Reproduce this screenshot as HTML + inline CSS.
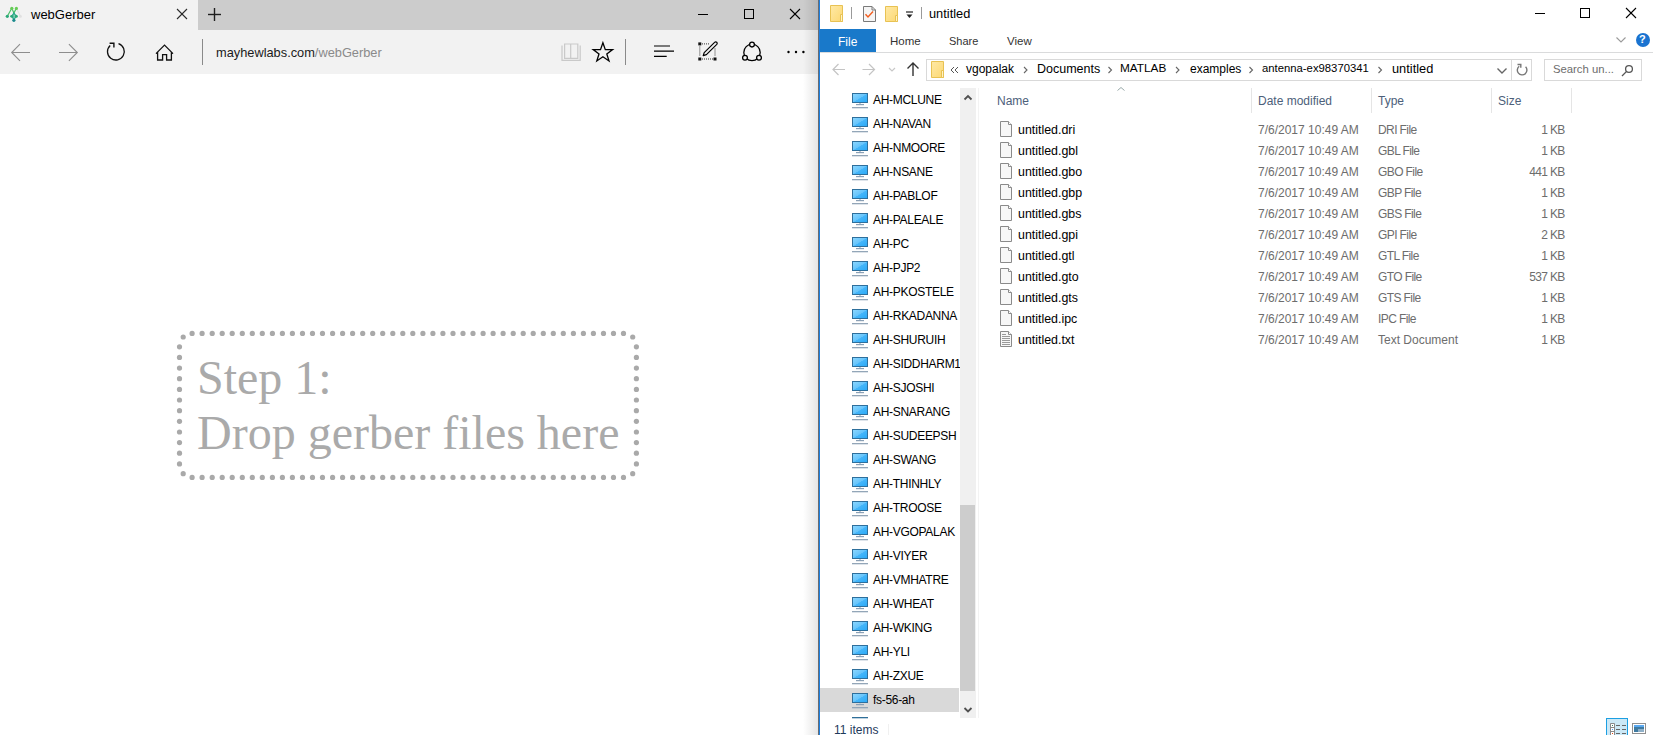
<!DOCTYPE html>
<html><head><meta charset="utf-8">
<style>
*{margin:0;padding:0;box-sizing:border-box}
html,body{width:1653px;height:735px;overflow:hidden;background:#fff;font-family:"Liberation Sans",sans-serif}
.a{position:absolute}
.t{position:absolute;white-space:pre;line-height:1}
svg{position:absolute;overflow:visible}
</style></head><body>
<!-- ============ EDGE ============ -->
<div class="a" style="left:0;top:0;width:818px;height:30px;background:#cccccc"></div>
<div class="a" style="left:0;top:0;width:198px;height:30px;background:#f2f2f2"></div>
<div class="a" style="left:0;top:30px;width:818px;height:44px;background:#f2f2f2"></div>

<!-- favicon -->
<svg style="left:0;top:0" width="1" height="1">
 <g stroke-width="1.2" fill="none" stroke-linecap="round">
  <line x1="16.5" y1="8.5" x2="20.5" y2="16.3" stroke="#e2e2e2"/>
  <line x1="11.8" y1="8.3" x2="7.3" y2="16.3" stroke="#4cc06a"/>
  <line x1="11.8" y1="8.3" x2="13.9" y2="13" stroke="#4cc06a"/>
  <line x1="16.3" y1="8.4" x2="13.9" y2="13" stroke="#4cc06a"/>
  <line x1="13.9" y1="13" x2="13.9" y2="20.3" stroke="#2ca98a"/>
  <path d="M13.9 13L11.6 16.3L13.9 19.5L16.3 16.3Z" stroke="#2aa98a"/>
 </g>
 <circle cx="20.4" cy="16.4" r="1.4" fill="#e0e0e0"/>
 <circle cx="11.8" cy="8.3" r="1.6" fill="#66cc55"/>
 <circle cx="16.4" cy="8.4" r="1.6" fill="#66cc55"/>
 <circle cx="7.3" cy="16.3" r="1.6" fill="#2aa878"/>
 <circle cx="11.6" cy="16.3" r="1.4" fill="#2aa878"/>
 <circle cx="16.3" cy="16.3" r="1.5" fill="#2aa878"/>
 <circle cx="13.9" cy="20.3" r="1.6" fill="#1b8a8c"/>
</svg>
<div class="t" style="left:31px;top:7.6px;font-size:13px;color:#000">webGerber</div>
<svg style="left:0;top:0" width="1" height="1" stroke="#2b2b2b" stroke-width="1.1">
 <line x1="177" y1="9" x2="187" y2="19"/><line x1="187" y1="9" x2="177" y2="19"/>
</svg>
<svg style="left:0;top:0" width="1" height="1" stroke="#1f1f1f" stroke-width="1.4">
 <line x1="214.5" y1="8" x2="214.5" y2="21"/><line x1="208" y1="14.5" x2="221" y2="14.5"/>
</svg>
<!-- window controls -->
<div class="a" style="left:698px;top:14px;width:10px;height:1px;background:#000"></div>
<div class="a" style="left:744px;top:9px;width:10px;height:10px;border:1px solid #000"></div>
<svg style="left:0;top:0" width="1" height="1" stroke="#000" stroke-width="1.1">
 <line x1="790" y1="9" x2="800" y2="19"/><line x1="800" y1="9" x2="790" y2="19"/>
</svg>
<!-- toolbar icons -->
<svg style="left:0;top:0" width="1" height="1" fill="none" stroke="#8e8e8e" stroke-width="1.1">
 <path d="M11.5 52.5H30M20 44.2L11.7 52.5L20 60.8"/>
 <path d="M59 52.5H77.5M68.9 44.2L77.3 52.5L68.9 60.8"/>
</svg>
<svg style="left:0;top:0" width="1" height="1" fill="none" stroke="#111" stroke-width="1.3">
 <path d="M118.5 43.6A8.4 8.4 0 1 1 110.2 45.4"/>
 <path d="M109.6 43.3H113.9V47.6" stroke-width="1.4"/>
 <path d="M156 53.6L164.5 45.1L173 53.6M157.6 52.3V60H162.6V54.6H166.6V60H171.4V52.3" stroke-linejoin="miter"/>
</svg>
<div class="a" style="left:202px;top:39px;width:1px;height:26px;background:#8a8a8a"></div>
<div class="t" style="left:216px;top:46.5px;font-size:12.8px;color:#1a1a1a">mayhewlabs.com<span style="color:#8a8a8a">/webGerber</span></div>
<!-- right icons -->
<svg style="left:0;top:0" width="1" height="1" fill="none" stroke="#c9c9c9" stroke-width="1.2">
 <path d="M562 45.5V60.3H580.2V45.5"/>
 <path d="M564.6 44H570.7V58.3H564.6Z M570.7 44H577.8V58.3H570.7Z"/>
</svg>
<svg style="left:0;top:0" width="1" height="1" fill="none" stroke="#000" stroke-width="1.3" stroke-linejoin="miter">
 <path d="M602.9 42.8L605.3 49.6L612.6 49.6L606.8 54L609 61L602.9 56.8L596.8 61L599 54L593.2 49.6L600.5 49.6Z"/>
</svg>
<div class="a" style="left:625px;top:39px;width:1px;height:26px;background:#8a8a8a"></div>
<svg style="left:0;top:0" width="1" height="1" fill="none" stroke="#000" stroke-width="1.2">
 <path d="M654 46H670M654 51.2H674M654 56.3H666.7"/>
</svg>
<svg style="left:0;top:0" width="1" height="1">
 <g fill="#111">
  <rect x="698.3" y="42.4" width="3" height="3"/><rect x="698.3" y="57.5" width="3" height="3"/><rect x="713.5" y="57.5" width="3" height="3"/>
 </g>
 <g stroke="#333" stroke-width="1" stroke-dasharray="1 1" fill="none">
  <path d="M702 43.9H709.5M699.8 46.5V56.5M702 59H713M715 48.5V56.5"/>
 </g>
 <path d="M703.2 55.6L704.2 52.6L714.6 42.4A1.2 1.2 0 0 1 716.8 44.4L706.4 54.6Z" fill="none" stroke="#000" stroke-width="1.2" stroke-linejoin="round"/>
</svg>
<svg style="left:0;top:0" width="1" height="1" fill="none" stroke="#000" stroke-width="1.3">
 <circle cx="752" cy="52.4" r="8.2"/>
 <circle cx="752" cy="44.6" r="2.4" fill="#f2f2f2"/>
 <circle cx="745" cy="57.7" r="2.4" fill="#f2f2f2"/>
 <circle cx="759" cy="57.7" r="2.4" fill="#f2f2f2"/>
</svg>
<svg style="left:0;top:0" width="1" height="1" fill="#000">
 <circle cx="788.5" cy="52" r="1.2"/><circle cx="796" cy="52" r="1.2"/><circle cx="803.4" cy="52" r="1.2"/>
</svg>
<div class="a" style="left:803px;top:0;width:15px;height:735px;background:linear-gradient(to right,rgba(0,0,0,0),rgba(0,0,0,0.10))"></div>

<!-- drop zone -->
<svg style="left:0;top:0" width="1" height="1"><g fill="#a9a9a9"><circle cx="192.1" cy="333.4" r="2.6"/><circle cx="192.1" cy="477.4" r="2.6"/><circle cx="202.1" cy="333.4" r="2.6"/><circle cx="202.1" cy="477.4" r="2.6"/><circle cx="212.2" cy="333.4" r="2.6"/><circle cx="212.2" cy="477.4" r="2.6"/><circle cx="222.2" cy="333.4" r="2.6"/><circle cx="222.2" cy="477.4" r="2.6"/><circle cx="232.2" cy="333.4" r="2.6"/><circle cx="232.2" cy="477.4" r="2.6"/><circle cx="242.3" cy="333.4" r="2.6"/><circle cx="242.3" cy="477.4" r="2.6"/><circle cx="252.3" cy="333.4" r="2.6"/><circle cx="252.3" cy="477.4" r="2.6"/><circle cx="262.3" cy="333.4" r="2.6"/><circle cx="262.3" cy="477.4" r="2.6"/><circle cx="272.4" cy="333.4" r="2.6"/><circle cx="272.4" cy="477.4" r="2.6"/><circle cx="282.4" cy="333.4" r="2.6"/><circle cx="282.4" cy="477.4" r="2.6"/><circle cx="292.4" cy="333.4" r="2.6"/><circle cx="292.4" cy="477.4" r="2.6"/><circle cx="302.5" cy="333.4" r="2.6"/><circle cx="302.5" cy="477.4" r="2.6"/><circle cx="312.5" cy="333.4" r="2.6"/><circle cx="312.5" cy="477.4" r="2.6"/><circle cx="322.5" cy="333.4" r="2.6"/><circle cx="322.5" cy="477.4" r="2.6"/><circle cx="332.6" cy="333.4" r="2.6"/><circle cx="332.6" cy="477.4" r="2.6"/><circle cx="342.6" cy="333.4" r="2.6"/><circle cx="342.6" cy="477.4" r="2.6"/><circle cx="352.6" cy="333.4" r="2.6"/><circle cx="352.6" cy="477.4" r="2.6"/><circle cx="362.7" cy="333.4" r="2.6"/><circle cx="362.7" cy="477.4" r="2.6"/><circle cx="372.7" cy="333.4" r="2.6"/><circle cx="372.7" cy="477.4" r="2.6"/><circle cx="382.7" cy="333.4" r="2.6"/><circle cx="382.7" cy="477.4" r="2.6"/><circle cx="392.8" cy="333.4" r="2.6"/><circle cx="392.8" cy="477.4" r="2.6"/><circle cx="402.8" cy="333.4" r="2.6"/><circle cx="402.8" cy="477.4" r="2.6"/><circle cx="412.8" cy="333.4" r="2.6"/><circle cx="412.8" cy="477.4" r="2.6"/><circle cx="422.9" cy="333.4" r="2.6"/><circle cx="422.9" cy="477.4" r="2.6"/><circle cx="432.9" cy="333.4" r="2.6"/><circle cx="432.9" cy="477.4" r="2.6"/><circle cx="442.9" cy="333.4" r="2.6"/><circle cx="442.9" cy="477.4" r="2.6"/><circle cx="453.0" cy="333.4" r="2.6"/><circle cx="453.0" cy="477.4" r="2.6"/><circle cx="463.0" cy="333.4" r="2.6"/><circle cx="463.0" cy="477.4" r="2.6"/><circle cx="473.0" cy="333.4" r="2.6"/><circle cx="473.0" cy="477.4" r="2.6"/><circle cx="483.1" cy="333.4" r="2.6"/><circle cx="483.1" cy="477.4" r="2.6"/><circle cx="493.1" cy="333.4" r="2.6"/><circle cx="493.1" cy="477.4" r="2.6"/><circle cx="503.1" cy="333.4" r="2.6"/><circle cx="503.1" cy="477.4" r="2.6"/><circle cx="513.2" cy="333.4" r="2.6"/><circle cx="513.2" cy="477.4" r="2.6"/><circle cx="523.2" cy="333.4" r="2.6"/><circle cx="523.2" cy="477.4" r="2.6"/><circle cx="533.2" cy="333.4" r="2.6"/><circle cx="533.2" cy="477.4" r="2.6"/><circle cx="543.3" cy="333.4" r="2.6"/><circle cx="543.3" cy="477.4" r="2.6"/><circle cx="553.3" cy="333.4" r="2.6"/><circle cx="553.3" cy="477.4" r="2.6"/><circle cx="563.3" cy="333.4" r="2.6"/><circle cx="563.3" cy="477.4" r="2.6"/><circle cx="573.4" cy="333.4" r="2.6"/><circle cx="573.4" cy="477.4" r="2.6"/><circle cx="583.4" cy="333.4" r="2.6"/><circle cx="583.4" cy="477.4" r="2.6"/><circle cx="593.4" cy="333.4" r="2.6"/><circle cx="593.4" cy="477.4" r="2.6"/><circle cx="603.5" cy="333.4" r="2.6"/><circle cx="603.5" cy="477.4" r="2.6"/><circle cx="613.5" cy="333.4" r="2.6"/><circle cx="613.5" cy="477.4" r="2.6"/><circle cx="623.5" cy="333.4" r="2.6"/><circle cx="623.5" cy="477.4" r="2.6"/><circle cx="179.5" cy="346.8" r="2.6"/><circle cx="636.4" cy="346.8" r="2.6"/><circle cx="179.5" cy="357.4" r="2.6"/><circle cx="636.4" cy="357.4" r="2.6"/><circle cx="179.5" cy="368.1" r="2.6"/><circle cx="636.4" cy="368.1" r="2.6"/><circle cx="179.5" cy="378.7" r="2.6"/><circle cx="636.4" cy="378.7" r="2.6"/><circle cx="179.5" cy="389.4" r="2.6"/><circle cx="636.4" cy="389.4" r="2.6"/><circle cx="179.5" cy="400.0" r="2.6"/><circle cx="636.4" cy="400.0" r="2.6"/><circle cx="179.5" cy="410.7" r="2.6"/><circle cx="636.4" cy="410.7" r="2.6"/><circle cx="179.5" cy="421.3" r="2.6"/><circle cx="636.4" cy="421.3" r="2.6"/><circle cx="179.5" cy="432.0" r="2.6"/><circle cx="636.4" cy="432.0" r="2.6"/><circle cx="179.5" cy="442.6" r="2.6"/><circle cx="636.4" cy="442.6" r="2.6"/><circle cx="179.5" cy="453.2" r="2.6"/><circle cx="636.4" cy="453.2" r="2.6"/><circle cx="179.5" cy="463.9" r="2.6"/><circle cx="636.4" cy="463.9" r="2.6"/><circle cx="183.2" cy="337.0" r="2.6"/><circle cx="632.7" cy="337.0" r="2.6"/><circle cx="183.2" cy="473.7" r="2.6"/><circle cx="632.7" cy="473.7" r="2.6"/></g></svg>
<div class="t" style="left:197px;top:350px;font-family:'Liberation Serif',serif;font-size:48px;color:#aaaaaa;line-height:55px">Step 1:<br>Drop gerber files here</div>

<!-- window border -->
<div class="a" style="left:818px;top:0;width:1px;height:735px;background:#6a6d72"></div>
<div class="a" style="left:819px;top:0;width:1px;height:735px;background:#1c7fe0"></div>

<!-- ============ EXPLORER ============ -->

<!-- quick access toolbar -->
<svg style="left:0;top:0" width="1" height="1">
 <defs><linearGradient id="fg" x1="0" y1="0" x2="1" y2="1"><stop offset="0" stop-color="#ffe9a6"/><stop offset="1" stop-color="#fcd873"/></linearGradient></defs>
 <path d="M830.5 5.5H842.5V21.5H830.5Z" fill="url(#fg)" stroke="#e8c253"/>
 <path d="M840.5 14.5H842.5V21.5H840.5Z" fill="#fff3c4" stroke="#e8c253"/>
 <line x1="851.5" y1="7" x2="851.5" y2="19" stroke="#9a9a9a"/>
 <path d="M863.5 6.5H872L875.5 10V21.5H863.5Z" fill="#f5f5f5" stroke="#7a7a7a"/>
 <path d="M872 6.5V10H875.5" fill="none" stroke="#7a7a7a"/>
 <path d="M865.5 14.2L868 17L873 11.5" fill="none" stroke="#f25d1f" stroke-width="1.4"/>
 <path d="M885.5 6.5H897.5V21.5H885.5Z" fill="url(#fg)" stroke="#e8c253"/>
 <path d="M895.5 15.5H897.5V21.5H895.5Z" fill="#fff3c4" stroke="#e8c253"/>
 <path d="M906 12H913" stroke="#222" stroke-width="1.2"/>
 <path d="M906.5 14.5H912.5L909.5 18Z" fill="#222"/>
 <line x1="921.5" y1="7" x2="921.5" y2="19" stroke="#9a9a9a"/>
</svg>
<div class="t" style="left:929px;top:8px;font-size:12.8px;color:#000">untitled</div>
<!-- window buttons -->
<div class="a" style="left:1535px;top:13px;width:10px;height:1px;background:#000"></div>
<div class="a" style="left:1580px;top:8px;width:10px;height:10px;border:1px solid #000"></div>
<svg style="left:0;top:0" width="1" height="1" stroke="#000" stroke-width="1.1">
 <line x1="1626" y1="8" x2="1636" y2="18"/><line x1="1636" y1="8" x2="1626" y2="18"/>
</svg>
<!-- ribbon tabs -->
<div class="a" style="left:820px;top:29px;width:56px;height:23px;background:#1979ca"></div>
<div class="t" style="left:838px;top:36px;font-size:12px;color:#fff">File</div>
<div class="t" style="left:890px;top:36px;font-size:11.5px;color:#333">Home</div>
<div class="t" style="left:949px;top:36px;font-size:11px;color:#333">Share</div>
<div class="t" style="left:1007px;top:36px;font-size:11.5px;color:#333">View</div>
<div class="a" style="left:820px;top:52px;width:833px;height:1px;background:#dadbdc"></div>
<svg style="left:0;top:0" width="1" height="1">
 <path d="M1616.5 37.5L1621 42L1625.5 37.5" fill="none" stroke="#9a9a9a" stroke-width="1.1"/>
 <circle cx="1643" cy="40" r="7" fill="#1a73d0"/>
</svg>
<div class="t" style="left:1639px;top:34px;font-size:11px;font-weight:bold;color:#fff">?</div>
<!-- nav buttons -->
<svg style="left:0;top:0" width="1" height="1" fill="none" stroke-width="1.2">
 <path d="M833 69.5H845M838.5 64L833 69.5L838.5 75" stroke="#c4c4c4"/>
 <path d="M862.5 69.5H874.5M869 64L874.5 69.5L869 75" stroke="#c4c4c4"/>
 <path d="M889 68L892 71L895 68" stroke="#c8c8c8"/>
 <path d="M913 76V63M907.5 68.5L913 63L918.5 68.5" stroke="#333" stroke-width="1.4"/>
</svg>
<!-- address bar -->
<div class="a" style="left:926px;top:59px;width:606px;height:22px;border:1px solid #d9d9d9"></div>
<div class="a" style="left:1511px;top:60px;width:1px;height:20px;background:#d9d9d9"></div>
<svg style="left:0;top:0" width="1" height="1">
 <path d="M931.5 61.5H943.5V77.5H931.5Z" fill="url(#fg)" stroke="#e8c253"/>
 <path d="M941.5 70.5H943.5V77.5H941.5Z" fill="#fff3c4" stroke="#e8c253"/>
 <path d="M954 67L951 70L954 73M958 67L955 70L958 73" fill="none" stroke="#555" stroke-width="1"/>
 <g fill="none" stroke="#666" stroke-width="1.1">
  <path d="M1024 67L1027 70L1024 73"/><path d="M1108.5 67L1111.5 70L1108.5 73"/><path d="M1176 67L1179 70L1176 73"/><path d="M1249.5 67L1252.5 70L1249.5 73"/><path d="M1378.5 67L1381.5 70L1378.5 73"/>
 </g>
 <path d="M1497.5 68.5L1502 73L1506.5 68.5" fill="none" stroke="#666" stroke-width="1.4"/>
 <path d="M1525.6 66.8A4.8 4.8 0 1 1 1519.2 66.3" fill="none" stroke="#777" stroke-width="1.4"/>
 <path d="M1517.5 64.5H1520.8V67.8" fill="none" stroke="#777" stroke-width="1.4"/>
</svg>
<div class="t" style="left:966px;top:63px;font-size:12px;color:#000">vgopalak</div>
<div class="t" style="left:1037px;top:63px;font-size:12.5px;color:#000">Documents</div>
<div class="t" style="left:1120px;top:63px;font-size:11.8px;color:#000">MATLAB</div>
<div class="t" style="left:1190px;top:63px;font-size:12px;color:#000">examples</div>
<div class="t" style="left:1262px;top:63px;font-size:11.3px;color:#000">antenna-ex98370341</div>
<div class="t" style="left:1392px;top:63px;font-size:12.8px;color:#000">untitled</div>
<!-- search -->
<div class="a" style="left:1544px;top:59px;width:98px;height:22px;border:1px solid #d9d9d9"></div>
<div class="t" style="left:1553px;top:64px;font-size:11.3px;color:#6d6d6d">Search un...</div>
<svg style="left:0;top:0" width="1" height="1" fill="none" stroke="#555" stroke-width="1.3">
 <circle cx="1629" cy="69" r="3.4"/><path d="M1626.6 71.4L1622 76"/>
</svg>
<!-- nav pane -->
<div class="a" style="left:820px;top:688px;width:139px;height:24px;background:#d9d9d9"></div>
<div class="a" style="left:960px;top:88px;width:16px;height:630px;background:#f0f0f0"></div>
<div class="a" style="left:960px;top:505px;width:15px;height:186px;background:#cdcdcd"></div>
<div class="a" style="left:978px;top:88px;width:1px;height:630px;background:#f3f3f3"></div>
<svg style="left:0;top:0" width="1" height="1" fill="none" stroke="#505050" stroke-width="1.8">
 <path d="M964.5 99.5L968 96L971.5 99.5"/><path d="M964.5 708L968 711.5L971.5 708"/>
</svg>
<div class="a" style="left:820px;top:88px;width:140px;height:630px;overflow:hidden">
<div class="t" style="left:53px;top:6px;font-size:12px;color:#000;letter-spacing:-0.3px">AH-MCLUNE</div>
<div class="t" style="left:53px;top:30px;font-size:12px;color:#000;letter-spacing:-0.3px">AH-NAVAN</div>
<div class="t" style="left:53px;top:54px;font-size:12px;color:#000;letter-spacing:-0.3px">AH-NMOORE</div>
<div class="t" style="left:53px;top:78px;font-size:12px;color:#000;letter-spacing:-0.3px">AH-NSANE</div>
<div class="t" style="left:53px;top:102px;font-size:12px;color:#000;letter-spacing:-0.3px">AH-PABLOF</div>
<div class="t" style="left:53px;top:126px;font-size:12px;color:#000;letter-spacing:-0.3px">AH-PALEALE</div>
<div class="t" style="left:53px;top:150px;font-size:12px;color:#000;letter-spacing:-0.3px">AH-PC</div>
<div class="t" style="left:53px;top:174px;font-size:12px;color:#000;letter-spacing:-0.3px">AH-PJP2</div>
<div class="t" style="left:53px;top:198px;font-size:12px;color:#000;letter-spacing:-0.3px">AH-PKOSTELE</div>
<div class="t" style="left:53px;top:222px;font-size:12px;color:#000;letter-spacing:-0.3px">AH-RKADANNA</div>
<div class="t" style="left:53px;top:246px;font-size:12px;color:#000;letter-spacing:-0.3px">AH-SHURUIH</div>
<div class="t" style="left:53px;top:270px;font-size:12px;color:#000;letter-spacing:-0.3px">AH-SIDDHARM1</div>
<div class="t" style="left:53px;top:294px;font-size:12px;color:#000;letter-spacing:-0.3px">AH-SJOSHI</div>
<div class="t" style="left:53px;top:318px;font-size:12px;color:#000;letter-spacing:-0.3px">AH-SNARANG</div>
<div class="t" style="left:53px;top:342px;font-size:12px;color:#000;letter-spacing:-0.3px">AH-SUDEEPSH</div>
<div class="t" style="left:53px;top:366px;font-size:12px;color:#000;letter-spacing:-0.3px">AH-SWANG</div>
<div class="t" style="left:53px;top:390px;font-size:12px;color:#000;letter-spacing:-0.3px">AH-THINHLY</div>
<div class="t" style="left:53px;top:414px;font-size:12px;color:#000;letter-spacing:-0.3px">AH-TROOSE</div>
<div class="t" style="left:53px;top:438px;font-size:12px;color:#000;letter-spacing:-0.3px">AH-VGOPALAK</div>
<div class="t" style="left:53px;top:462px;font-size:12px;color:#000;letter-spacing:-0.3px">AH-VIYER</div>
<div class="t" style="left:53px;top:486px;font-size:12px;color:#000;letter-spacing:-0.3px">AH-VMHATRE</div>
<div class="t" style="left:53px;top:510px;font-size:12px;color:#000;letter-spacing:-0.3px">AH-WHEAT</div>
<div class="t" style="left:53px;top:534px;font-size:12px;color:#000;letter-spacing:-0.3px">AH-WKING</div>
<div class="t" style="left:53px;top:558px;font-size:12px;color:#000;letter-spacing:-0.3px">AH-YLI</div>
<div class="t" style="left:53px;top:582px;font-size:12px;color:#000;letter-spacing:-0.3px">AH-ZXUE</div>
<div class="t" style="left:53px;top:606px;font-size:12px;color:#000;letter-spacing:-0.3px">fs-56-ah</div>
</div>
<svg style="left:0;top:0" width="1" height="1"><defs>
<linearGradient id="mg" x1="0" y1="0" x2="1" y2="1"><stop offset="0" stop-color="#8ed8ff"/><stop offset="0.5" stop-color="#66c4fb"/><stop offset="0.52" stop-color="#45b6fa"/><stop offset="1" stop-color="#2aa9f6"/></linearGradient>
<g id="mon"><rect x="0.5" y="0.5" width="15" height="9" fill="url(#mg)" stroke="#2e6f9c"/><rect x="7" y="10" width="2" height="1" fill="#c5ced6"/><rect x="4" y="11" width="8" height="1.2" fill="#8aa0b6"/><rect x="0" y="14" width="16" height="1.3" fill="#93a6b8"/></g>
<g id="doc"><path d="M1000.5 0.5H1008.5L1011.5 3.5V15.5H1000.5Z" fill="#f7f7f7" stroke="#8a8a8a"/><path d="M1008.5 0.5V3.5H1011.5" fill="#fff" stroke="#8a8a8a"/></g>
</defs><use href="#mon" x="852" y="93"/><use href="#mon" x="852" y="117"/><use href="#mon" x="852" y="141"/><use href="#mon" x="852" y="165"/><use href="#mon" x="852" y="189"/><use href="#mon" x="852" y="213"/><use href="#mon" x="852" y="237"/><use href="#mon" x="852" y="261"/><use href="#mon" x="852" y="285"/><use href="#mon" x="852" y="309"/><use href="#mon" x="852" y="333"/><use href="#mon" x="852" y="357"/><use href="#mon" x="852" y="381"/><use href="#mon" x="852" y="405"/><use href="#mon" x="852" y="429"/><use href="#mon" x="852" y="453"/><use href="#mon" x="852" y="477"/><use href="#mon" x="852" y="501"/><use href="#mon" x="852" y="525"/><use href="#mon" x="852" y="549"/><use href="#mon" x="852" y="573"/><use href="#mon" x="852" y="597"/><use href="#mon" x="852" y="621"/><use href="#mon" x="852" y="645"/><use href="#mon" x="852" y="669"/><use href="#mon" x="852" y="693"/><use href="#mon" x="852" y="717"/></svg>
<div class="a" style="left:820px;top:718px;width:833px;height:17px;background:#fff"></div>
<svg style="left:0;top:0" width="1" height="1"><rect x="852" y="717" width="16" height="1.3" fill="#2f6f99"/></svg>
<div class="t" style="left:834px;top:724px;font-size:12px;color:#1e395b">11 items</div>
<div class="a" style="left:888px;top:724px;width:1px;height:11px;background:#f0f0f0"></div>
<div class="t" style="left:997px;top:95px;font-size:12px;color:#4c607a">Name</div>
<svg style="left:0;top:0" width="1" height="1"><path d="M1117.5 90.5L1121 87.5L1124.5 90.5" fill="none" stroke="#9aa" stroke-width="1"/></svg>
<div class="t" style="left:1258px;top:95px;font-size:12px;color:#4c607a">Date modified</div>
<div class="t" style="left:1378px;top:95px;font-size:12px;color:#4c607a">Type</div>
<div class="t" style="left:1498px;top:95px;font-size:12px;color:#4c607a">Size</div>
<div class="a" style="left:1251px;top:88px;width:1px;height:25px;background:#e5e5e5"></div>
<div class="a" style="left:1371px;top:88px;width:1px;height:25px;background:#e5e5e5"></div>
<div class="a" style="left:1491px;top:88px;width:1px;height:25px;background:#e5e5e5"></div>
<div class="a" style="left:1571px;top:88px;width:1px;height:25px;background:#e5e5e5"></div>
<div class="t" style="left:1018px;top:124px;font-size:12.4px;color:#000">untitled.dri</div><div class="t" style="left:1258px;top:124px;font-size:12px;color:#6d6d6d">7/6/2017 10:49 AM</div><div class="t" style="left:1378px;top:124px;font-size:12px;color:#6d6d6d;letter-spacing:-0.6px">DRI File</div><div class="t" style="left:1464px;width:100.6px;text-align:right;top:124px;font-size:12px;color:#6d6d6d;letter-spacing:-0.65px">1 KB</div>
<div class="t" style="left:1018px;top:145px;font-size:12.4px;color:#000">untitled.gbl</div><div class="t" style="left:1258px;top:145px;font-size:12px;color:#6d6d6d">7/6/2017 10:49 AM</div><div class="t" style="left:1378px;top:145px;font-size:12px;color:#6d6d6d;letter-spacing:-0.6px">GBL File</div><div class="t" style="left:1464px;width:100.6px;text-align:right;top:145px;font-size:12px;color:#6d6d6d;letter-spacing:-0.65px">1 KB</div>
<div class="t" style="left:1018px;top:166px;font-size:12.4px;color:#000">untitled.gbo</div><div class="t" style="left:1258px;top:166px;font-size:12px;color:#6d6d6d">7/6/2017 10:49 AM</div><div class="t" style="left:1378px;top:166px;font-size:12px;color:#6d6d6d;letter-spacing:-0.6px">GBO File</div><div class="t" style="left:1464px;width:100.6px;text-align:right;top:166px;font-size:12px;color:#6d6d6d;letter-spacing:-0.65px">441 KB</div>
<div class="t" style="left:1018px;top:187px;font-size:12.4px;color:#000">untitled.gbp</div><div class="t" style="left:1258px;top:187px;font-size:12px;color:#6d6d6d">7/6/2017 10:49 AM</div><div class="t" style="left:1378px;top:187px;font-size:12px;color:#6d6d6d;letter-spacing:-0.6px">GBP File</div><div class="t" style="left:1464px;width:100.6px;text-align:right;top:187px;font-size:12px;color:#6d6d6d;letter-spacing:-0.65px">1 KB</div>
<div class="t" style="left:1018px;top:208px;font-size:12.4px;color:#000">untitled.gbs</div><div class="t" style="left:1258px;top:208px;font-size:12px;color:#6d6d6d">7/6/2017 10:49 AM</div><div class="t" style="left:1378px;top:208px;font-size:12px;color:#6d6d6d;letter-spacing:-0.6px">GBS File</div><div class="t" style="left:1464px;width:100.6px;text-align:right;top:208px;font-size:12px;color:#6d6d6d;letter-spacing:-0.65px">1 KB</div>
<div class="t" style="left:1018px;top:229px;font-size:12.4px;color:#000">untitled.gpi</div><div class="t" style="left:1258px;top:229px;font-size:12px;color:#6d6d6d">7/6/2017 10:49 AM</div><div class="t" style="left:1378px;top:229px;font-size:12px;color:#6d6d6d;letter-spacing:-0.6px">GPI File</div><div class="t" style="left:1464px;width:100.6px;text-align:right;top:229px;font-size:12px;color:#6d6d6d;letter-spacing:-0.65px">2 KB</div>
<div class="t" style="left:1018px;top:250px;font-size:12.4px;color:#000">untitled.gtl</div><div class="t" style="left:1258px;top:250px;font-size:12px;color:#6d6d6d">7/6/2017 10:49 AM</div><div class="t" style="left:1378px;top:250px;font-size:12px;color:#6d6d6d;letter-spacing:-0.6px">GTL File</div><div class="t" style="left:1464px;width:100.6px;text-align:right;top:250px;font-size:12px;color:#6d6d6d;letter-spacing:-0.65px">1 KB</div>
<div class="t" style="left:1018px;top:271px;font-size:12.4px;color:#000">untitled.gto</div><div class="t" style="left:1258px;top:271px;font-size:12px;color:#6d6d6d">7/6/2017 10:49 AM</div><div class="t" style="left:1378px;top:271px;font-size:12px;color:#6d6d6d;letter-spacing:-0.6px">GTO File</div><div class="t" style="left:1464px;width:100.6px;text-align:right;top:271px;font-size:12px;color:#6d6d6d;letter-spacing:-0.65px">537 KB</div>
<div class="t" style="left:1018px;top:292px;font-size:12.4px;color:#000">untitled.gts</div><div class="t" style="left:1258px;top:292px;font-size:12px;color:#6d6d6d">7/6/2017 10:49 AM</div><div class="t" style="left:1378px;top:292px;font-size:12px;color:#6d6d6d;letter-spacing:-0.6px">GTS File</div><div class="t" style="left:1464px;width:100.6px;text-align:right;top:292px;font-size:12px;color:#6d6d6d;letter-spacing:-0.65px">1 KB</div>
<div class="t" style="left:1018px;top:313px;font-size:12.4px;color:#000">untitled.ipc</div><div class="t" style="left:1258px;top:313px;font-size:12px;color:#6d6d6d">7/6/2017 10:49 AM</div><div class="t" style="left:1378px;top:313px;font-size:12px;color:#6d6d6d;letter-spacing:-0.6px">IPC File</div><div class="t" style="left:1464px;width:100.6px;text-align:right;top:313px;font-size:12px;color:#6d6d6d;letter-spacing:-0.65px">1 KB</div>
<div class="t" style="left:1018px;top:334px;font-size:12.4px;color:#000">untitled.txt</div><div class="t" style="left:1258px;top:334px;font-size:12px;color:#6d6d6d">7/6/2017 10:49 AM</div><div class="t" style="left:1378px;top:334px;font-size:12px;color:#6d6d6d">Text Document</div><div class="t" style="left:1464px;width:100.6px;text-align:right;top:334px;font-size:12px;color:#6d6d6d;letter-spacing:-0.65px">1 KB</div>
<svg style="left:0;top:0" width="1" height="1"><use href="#doc" y="121"/><use href="#doc" y="142"/><use href="#doc" y="163"/><use href="#doc" y="184"/><use href="#doc" y="205"/><use href="#doc" y="226"/><use href="#doc" y="247"/><use href="#doc" y="268"/><use href="#doc" y="289"/><use href="#doc" y="310"/><use href="#doc" y="331"/><g stroke="#9a9a9a" stroke-width="1"><path d="M1002 334.5H1006M1002 336.5H1010M1002 338.5H1010M1002 340.5H1010M1002 342.5H1010M1002 344.5H1010"/></g></svg>
<svg style="left:0;top:0" width="1" height="1">
 <rect x="1606.5" y="718.5" width="21" height="18" fill="#cce8f6" stroke="#1c9fe2"/>
 <path d="M1610.5 723.5H1614.5V736M1610.5 723.5V736M1610.5 727.5H1614.5M1610.5 731.5H1614.5M1610.5 735.5H1614.5" fill="none" stroke="#8a8a8a"/>
 <rect x="1611" y="724" width="3" height="3" fill="#fff"/><rect x="1611" y="728" width="3" height="3" fill="#fff"/><rect x="1611" y="732" width="3" height="3" fill="#fff"/>
 <rect x="1612" y="725" width="1" height="1" fill="#3a7a6a"/><rect x="1612" y="729" width="1" height="1" fill="#4aa0ff"/><rect x="1612" y="733" width="1" height="1" fill="#e84a10"/>
 <path d="M1616 725.5H1620M1622 725.5H1626M1616 729.5H1620M1622 729.5H1626M1616 733.5H1620M1622 733.5H1626" stroke="#666"/>
 <rect x="1632.5" y="723.5" width="13" height="10" fill="#fff" stroke="#8f8f8f"/>
 <rect x="1634" y="725" width="10" height="7" fill="#3f7aa0"/>
 <rect x="1634" y="725" width="10" height="2" fill="#59a8f0"/>
 <rect x="1638" y="729" width="6" height="3" fill="#8fb0c8"/>
</svg>

</body></html>
